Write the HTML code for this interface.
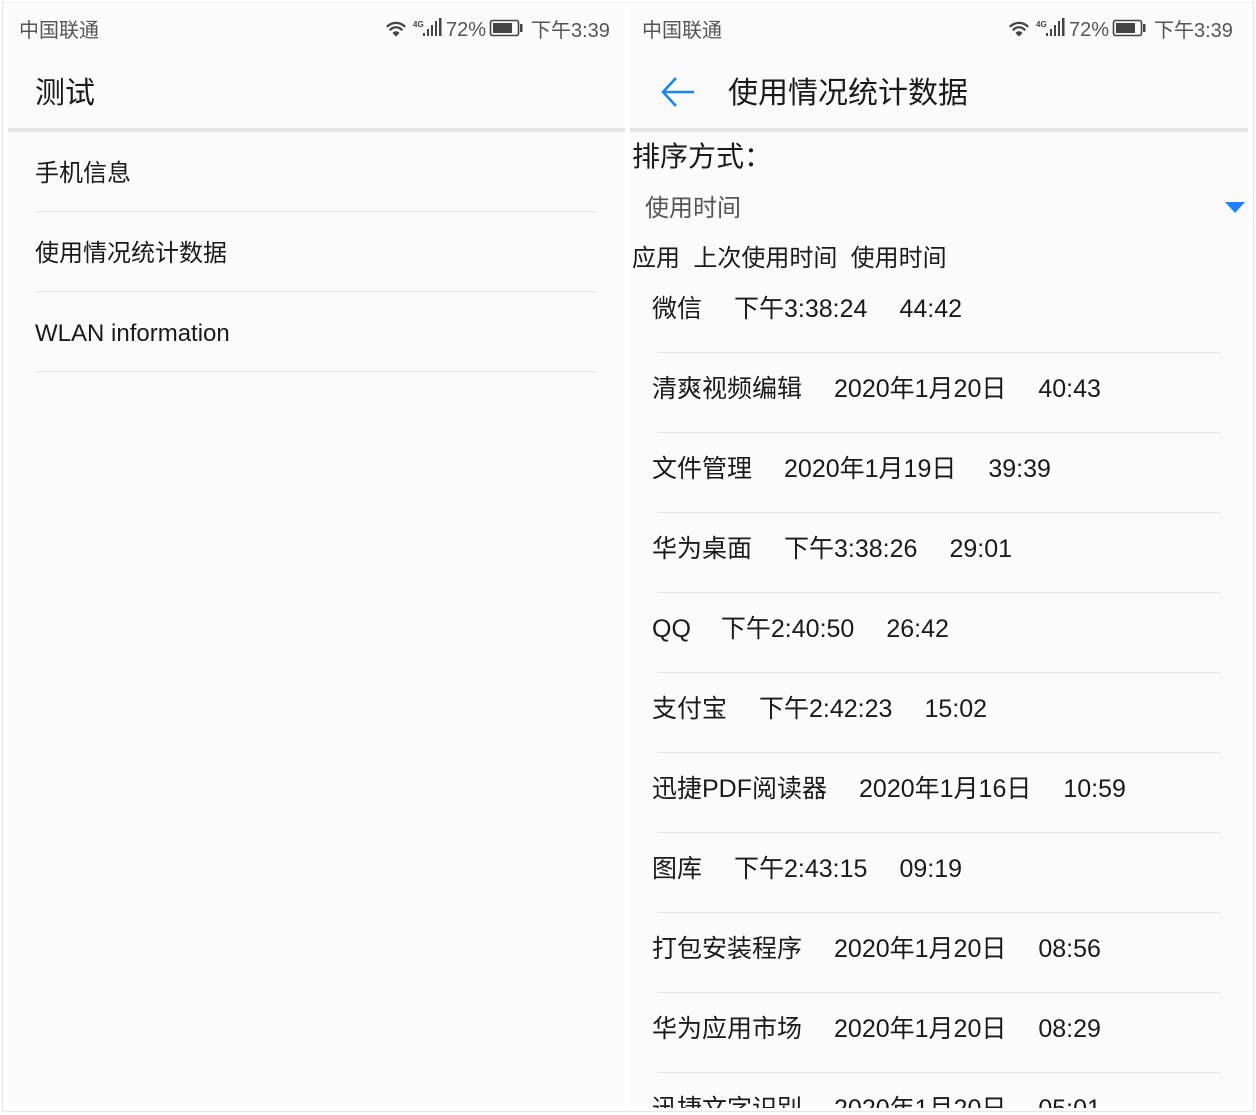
<!DOCTYPE html>
<html><head><meta charset="utf-8"><style>
*{margin:0;padding:0;box-sizing:border-box}
body{width:1256px;height:1115px;background:#fff;position:relative;overflow:hidden;font-family:"Liberation Sans","Noto Sans CJK SC",sans-serif;color:#1a1a1a}
.frame{position:absolute;left:2px;top:2px;width:1252px;height:1110px;border:1px solid #e6e6e6;border-top-color:#f0f0f0;background:#fff}
.p{position:absolute;top:8px;height:1100px;background:#fbfbfb;overflow:hidden}
.t{position:absolute;white-space:nowrap;line-height:1}
.sb{font-size:20px;color:#555}
.d{position:absolute;height:1px;background:#e6e6e6}
.thick{position:absolute;height:4px;background:#e4e4e4}
.row span{margin-right:32px}
</style></head><body>
<div class="frame"></div>
<div class="p" style="left:8px;width:617px">
  <div class="t sb" style="left:11px;top:13px">中国联通</div>
  <div class="thick" style="left:0;top:120px;width:617px"></div>
  <div class="t" style="left:27px;top:71px;font-size:30px">测试</div>
  <div class="t" style="left:27px;top:154px;font-size:24px">手机信息</div>
  <div class="d" style="left:27px;top:203px;width:562px"></div>
  <div class="t" style="left:27px;top:234px;font-size:24px">使用情况统计数据</div>
  <div class="d" style="left:27px;top:283px;width:562px"></div>
  <div class="t" style="left:27px;top:314px;font-size:24px">WLAN information</div>
  <div class="d" style="left:27px;top:363px;width:562px"></div>
</div>
<div class="p" style="left:630px;width:618px">
  <div class="t sb" style="left:12px;top:13px">中国联通</div>
  <div class="thick" style="left:0;top:120px;width:618px"></div>
  <svg style="position:absolute;left:30px;top:67px" width="36" height="34" viewBox="0 0 36 34"><path d="M3 17H34M16 3L3 17L16 31" fill="none" stroke="#1a85ff" stroke-width="2.6"/></svg>
  <div class="t" style="left:98px;top:71px;font-size:30px">使用情况统计数据</div>
  <div class="t" style="left:2px;top:135px;font-size:28px">排序方式：</div>
  <div class="t" style="left:15px;top:189px;font-size:24px;color:#555">使用时间</div>
  <svg style="position:absolute;left:595px;top:194px" width="20" height="11"><path d="M0 0H20L10 11Z" fill="#1a85ff"/></svg>
  <div class="t" style="left:2px;top:239px;font-size:24px">应用&nbsp; 上次使用时间&nbsp; 使用时间</div>
</div>
<svg style="position:absolute;left:0;top:0" width="1256" height="50">
  <g id="si" fill="#444">
    <path d="M386 26a14 14 0 0 1 20 0l-1.6 1.6a11.7 11.7 0 0 0-16.8 0z M389 29.5a9 9 0 0 1 14 0l-1.6 1.6a6.8 6.8 0 0 0-10.8 0z M392.5 33a4.3 4.3 0 0 1 7 0L396 36.6z"/>
    <text x="413" y="27" font-size="8" font-family="Liberation Sans" font-weight="bold">4G</text>
    <rect x="423" y="33" width="2" height="3"/><rect x="427" y="29" width="2" height="7"/><rect x="431" y="25" width="2" height="11"/><rect x="435" y="21" width="2" height="15"/><rect x="439" y="18" width="2.5" height="18"/>
    <text x="446" y="36" font-size="20" font-family="Liberation Sans" fill="#555">72%</text>
    <rect x="490.5" y="20.5" width="28" height="15" rx="2" fill="none" stroke="#444" stroke-width="1.6"/><rect x="493" y="23" width="19" height="10"/><rect x="520" y="24" width="2.5" height="8"/>
    <text x="531" y="37" font-size="20" font-family="Liberation Sans,Noto Sans CJK SC" fill="#555">下午3:39</text>
  </g>
  <use href="#si" x="623"/>
</svg>
<div style="position:absolute;left:652px;top:0;width:600px;height:1108px;overflow:hidden">
  <div class="t row" style="left:0;top:297px;font-size:25px"><span>微信</span><span>下午3:38:24</span><span>44:42</span></div>
  <div class="d" style="left:5px;top:352px;width:564px"></div>
  <div class="t row" style="left:0;top:377px;font-size:25px"><span>清爽视频编辑</span><span>2020年1月20日</span><span>40:43</span></div>
  <div class="d" style="left:5px;top:432px;width:564px"></div>
  <div class="t row" style="left:0;top:457px;font-size:25px"><span>文件管理</span><span>2020年1月19日</span><span>39:39</span></div>
  <div class="d" style="left:5px;top:512px;width:564px"></div>
  <div class="t row" style="left:0;top:537px;font-size:25px"><span>华为桌面</span><span>下午3:38:26</span><span>29:01</span></div>
  <div class="d" style="left:5px;top:592px;width:564px"></div>
  <div class="t row" style="left:0;top:617px;font-size:25px"><span style="margin-right:30px">QQ</span><span>下午2:40:50</span><span>26:42</span></div>
  <div class="d" style="left:5px;top:672px;width:564px"></div>
  <div class="t row" style="left:0;top:697px;font-size:25px"><span>支付宝</span><span>下午2:42:23</span><span>15:02</span></div>
  <div class="d" style="left:5px;top:752px;width:564px"></div>
  <div class="t row" style="left:0;top:777px;font-size:25px"><span>迅捷PDF阅读器</span><span>2020年1月16日</span><span>10:59</span></div>
  <div class="d" style="left:5px;top:832px;width:564px"></div>
  <div class="t row" style="left:0;top:857px;font-size:25px"><span>图库</span><span>下午2:43:15</span><span>09:19</span></div>
  <div class="d" style="left:5px;top:912px;width:564px"></div>
  <div class="t row" style="left:0;top:937px;font-size:25px"><span>打包安装程序</span><span>2020年1月20日</span><span>08:56</span></div>
  <div class="d" style="left:5px;top:992px;width:564px"></div>
  <div class="t row" style="left:0;top:1017px;font-size:25px"><span>华为应用市场</span><span>2020年1月20日</span><span>08:29</span></div>
  <div class="d" style="left:5px;top:1072px;width:564px"></div>
  <div class="t row" style="left:0;top:1097px;font-size:25px"><span>迅捷文字识别</span><span>2020年1月20日</span><span>05:01</span></div>
</div>
</body></html>
